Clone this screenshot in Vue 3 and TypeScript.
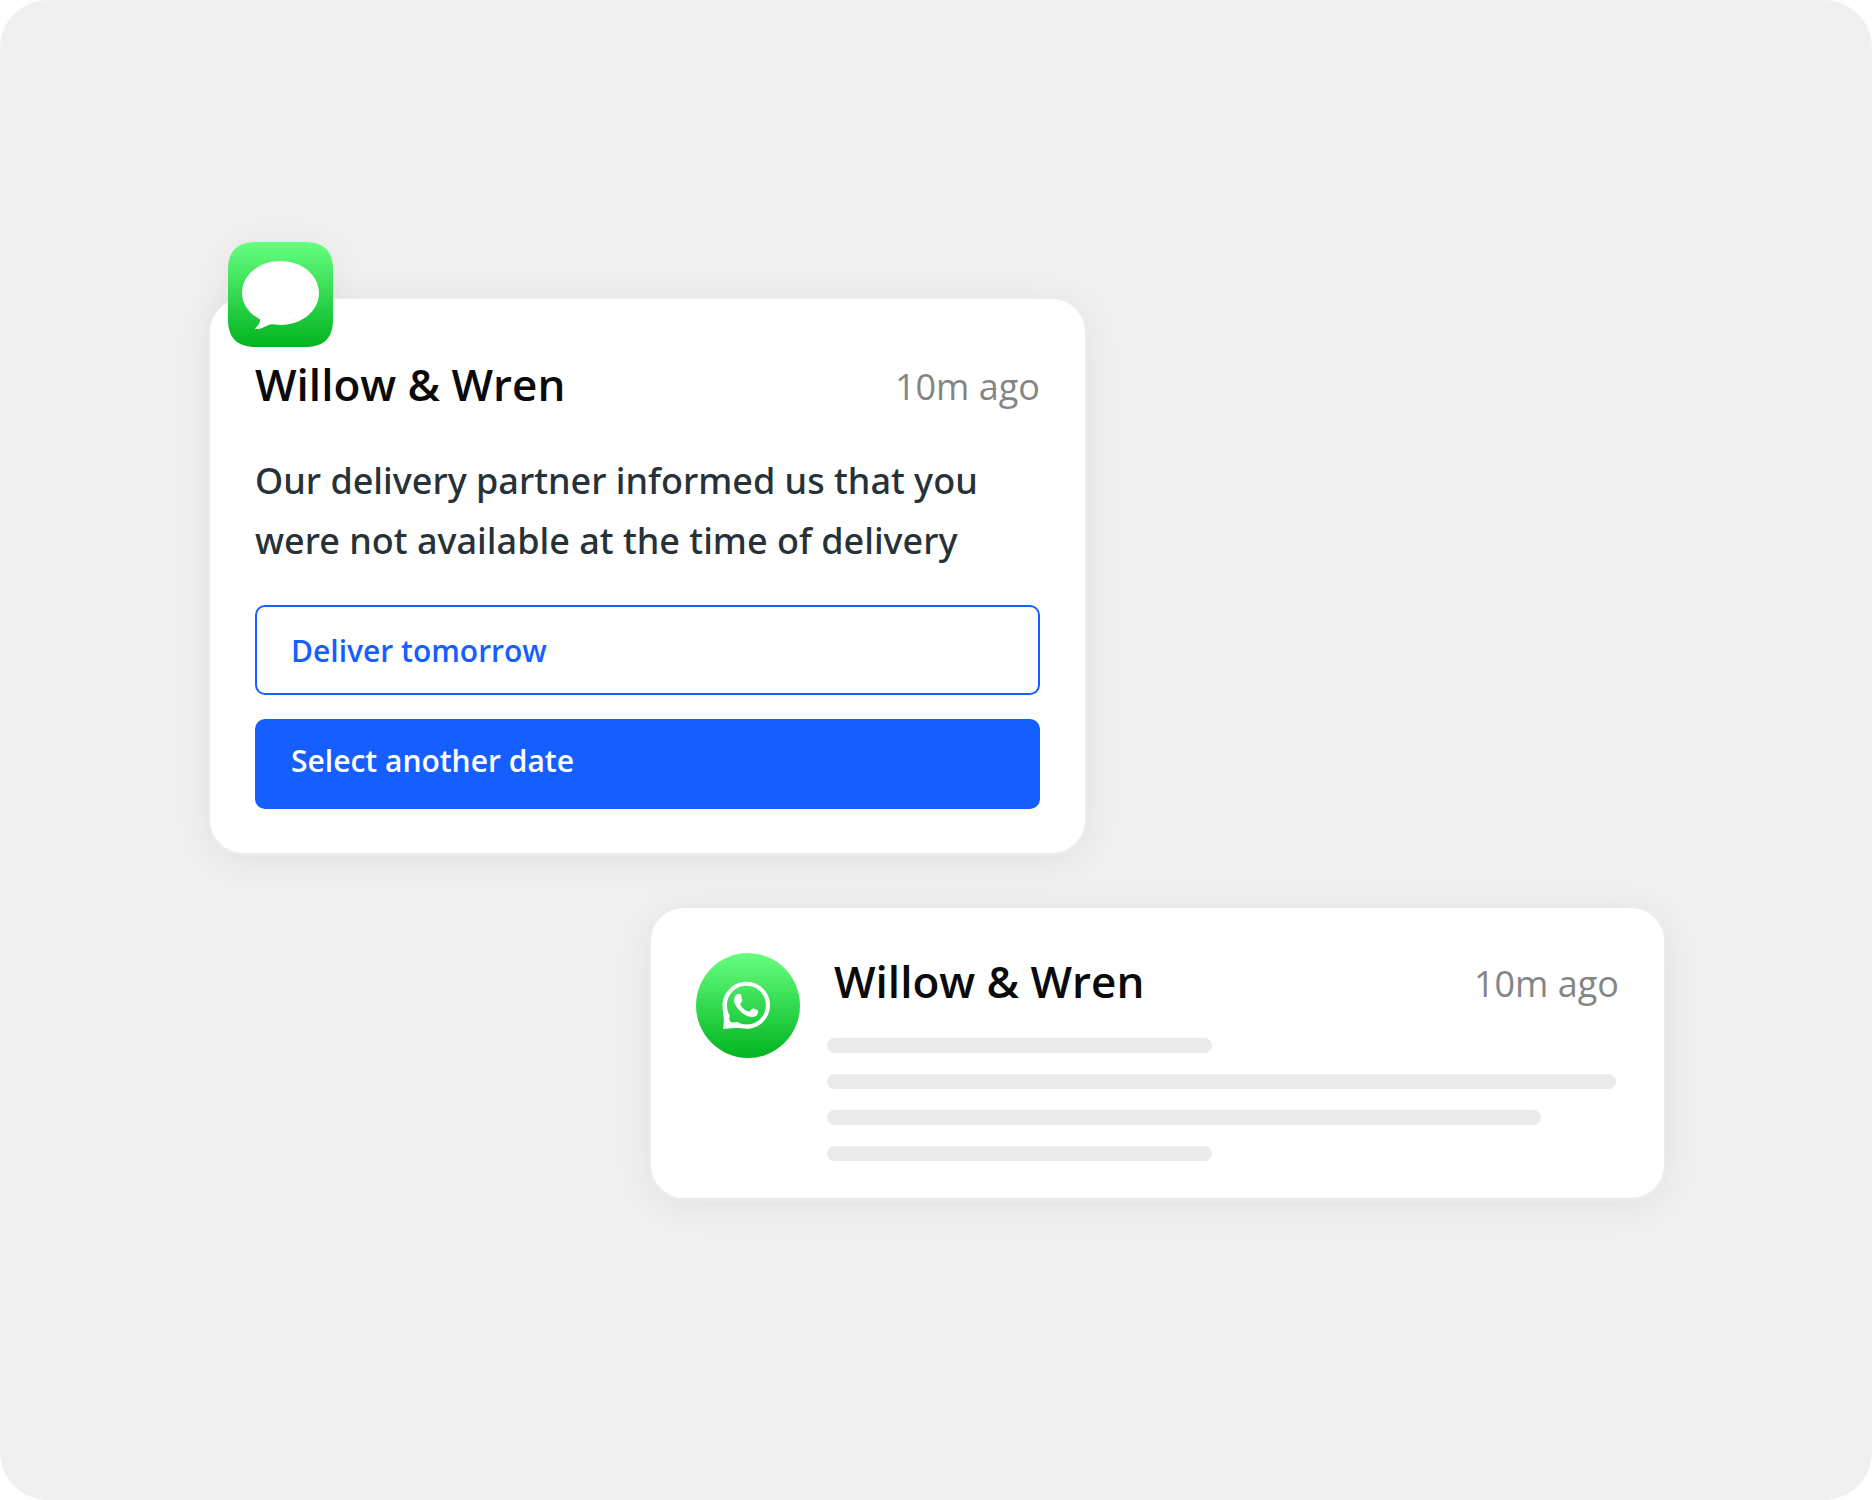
<script setup lang="ts">
const sender = 'Willow & Wren'
const time = '10m ago'
const lines: number[] = [385, 789, 714, 385]
</script>

<template>
  <main class="scene">
    <div class="stack">
      <article class="card message">
        <svg class="app-icon" viewBox="0 0 105 105" role="img" aria-label="Messages">
          <defs>
            <linearGradient id="messages-fill" x1="0" y1="0" x2="0" y2="1">
              <stop offset="0" stop-color="#67ff81" />
              <stop offset="1" stop-color="#01b41f" />
            </linearGradient>
          </defs>
          <path
            fill="url(#messages-fill)"
            d="M28 0H77C96 0 105 9 105 28V77C105 96 96 105 77 105H28C9 105 0 96 0 77V28C0 9 9 0 28 0Z"
          />
          <path
            fill="#fff"
            d="M52.500 19C73.800 19 91 33.300 91 51C91 68.700 73.800 83 52.500 83C49 83 46 82.200 42.500 82.400C38.500 82.900 34.500 87.200 27.600 87C26.800 86.900 27 86.200 27.600 85.700C30.200 83.700 32.200 80.500 32.200 77.600C21.200 71.800 14 62 14 51C14 33.300 31.200 19 52.500 19Z"
          />
        </svg>
        <header class="head">
          <h2 class="sender">{{ sender }}</h2>
          <time class="time">{{ time }}</time>
        </header>
        <p class="body">Our delivery partner informed us that you were not available at the time of delivery</p>
        <div class="actions">
          <button type="button" class="action">Deliver tomorrow</button>
          <button type="button" class="action primary">Select another date</button>
        </div>
      </article>

      <article class="card preview">
        <svg class="avatar" viewBox="0 0 104 105" role="img" aria-label="WhatsApp">
          <defs>
            <linearGradient id="whatsapp-fill" x1="0" y1="0" x2="0" y2="1">
              <stop offset="0" stop-color="#67ff81" />
              <stop offset="1" stop-color="#01b41f" />
            </linearGradient>
          </defs>
          <ellipse cx="52" cy="52.500" rx="52" ry="52.500" fill="url(#whatsapp-fill)" />
          <path
            fill="#fff"
            fill-rule="evenodd"
            d="M50.500 28.700C63.500 28.700 74 39.200 74 52.200C74 65.200 63.500 75.700 50.500 75.700C46 75.700 42.500 74.900 38.500 75C34.500 75.100 31 75.600 27.200 76.100C27.600 71.500 28 68 27.600 64C27.200 60 26.500 57 26.500 52.500C26.500 39.300 37.500 28.700 50.500 28.700ZM50.500 32.800C39.700 32.800 31 41.500 31 52.300C31 56 31.800 59.400 33.600 62.200C34.200 63.200 32.900 64.500 33.400 66.500C33.900 68.700 35 69.600 37.500 69.400C39.300 69.200 40.500 68.500 42 69.300C44.500 70.700 47.500 71.500 50.500 71.500C61.400 71.500 69.900 63 69.900 52.200C69.900 41.300 61.400 32.800 50.500 32.800Z"
          />
          <path
            fill="#fff"
            d="M42.500 40.800C44.500 40.500 45.100 41.200 45.400 43.200L46.200 47.600C46.500 49.500 43.900 49.800 44.400 51.700C45.500 54.500 49.200 57.500 52.300 58.500C54.300 59 54.900 55.600 57 55.400C58.300 55.300 60.800 56.500 61.700 57C63 57.800 61.700 61.700 60.300 62.700C57.200 64.900 53 64.300 49 61.800C44.300 58.900 40.300 54.300 38.600 50.200C37.200 46.800 38.500 41.400 42.500 40.800Z"
          />
        </svg>
        <div class="content">
          <header class="head inset">
            <h2 class="sender">{{ sender }}</h2>
            <time class="time">{{ time }}</time>
          </header>
          <div class="lines" aria-hidden="true">
            <span v-for="(width, i) in lines" :key="i" class="line" :style="{ width: width + 'px' }"></span>
          </div>
        </div>
      </article>
    </div>
  </main>
</template>

<style>
body {
  margin: 0;
  background: #fff;
}
</style>

<style scoped>
.scene {
  box-sizing: border-box;
  min-height: 100vh;
  padding: 58px 23px 61px 25px;
  display: flex;
  align-items: center;
  justify-content: center;
  background: #f0f0f0;
  border-radius: 48px;
  font-family: "Open Sans", "Noto Sans", sans-serif;
}

.stack {
  isolation: isolate;
  width: 100%;
  max-width: 1454px;
  display: flex;
  flex-direction: column;
  gap: 55px;
}

.card {
  box-sizing: border-box;
  width: 100%;
  background: #fff;
  border-radius: 33px;
  box-shadow: 0 1px 0 2px rgba(240, 240, 240, 0.5), 0 6px 42px rgba(0, 0, 0, 0.07);
}

.message {
  position: relative;
  max-width: 875px;
  padding: 55px 45px 44px;
}

.app-icon,
.message::before {
  position: absolute;
  top: -57px;
  left: 18px;
  width: 105px;
  height: 105px;
}

.message::before {
  content: "";
  z-index: -1;
  border-radius: 28px;
  box-shadow: 0 6px 42px rgba(0, 0, 0, 0.06);
}

.head {
  display: flex;
  align-items: center;
  justify-content: space-between;
  gap: 24px;
}

.inset {
  padding-left: 7px;
}

.sender {
  margin: 0;
  color: #0a0a0a;
  font-size: 44px;
  font-weight: 600;
  line-height: 60px;
}

.time {
  padding-top: 6px;
  color: #858585;
  font-size: 36px;
  font-weight: 400;
  line-height: 48px;
  white-space: nowrap;
}

.body {
  margin: 37px 0 34px;
  color: #263238;
  font-family: "Noto Sans", sans-serif;
  font-size: 36px;
  font-weight: 500;
  line-height: 60px;
}

.actions {
  display: flex;
  flex-direction: column;
  gap: 24px;
}

.action {
  box-sizing: border-box;
  min-height: 90px;
  padding: 2px 34px 0;
  border: 2px solid #155eff;
  border-radius: 10px;
  background: #fff;
  color: #155eff;
  font-family: inherit;
  font-size: 30px;
  font-weight: 600;
  line-height: 40px;
  text-align: left;
  cursor: pointer;
}

.primary {
  padding-bottom: 8px;
  background: #155eff;
  color: #fff;
}

.preview {
  max-width: 1013px;
  padding: 43px 45px 37px;
  align-self: flex-end;
  display: flex;
  gap: 27px;
}

.avatar {
  flex: none;
  width: 104px;
  height: 105px;
  margin-top: 2px;
}

.content {
  flex: 1;
  min-width: 0;
}

.lines {
  margin-top: 27px;
  display: flex;
  flex-direction: column;
  gap: 21px;
}

.line {
  max-width: 100%;
  height: 15px;
  border-radius: 8px;
  background: #ebebeb;
}
</style>
